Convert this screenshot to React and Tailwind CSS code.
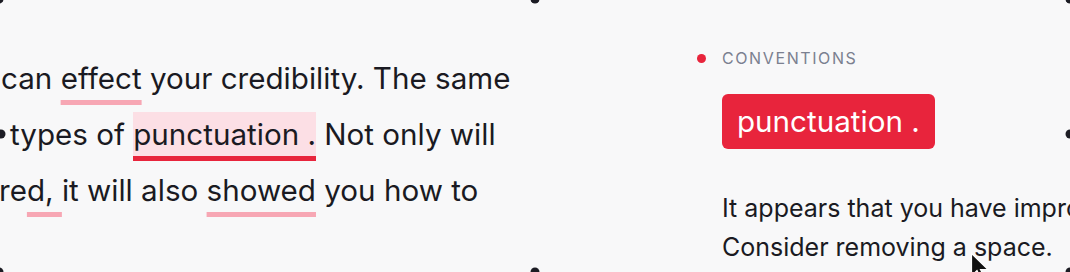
import React from "react";

function Handle({ className }) {
  return (
    <div
      className={`absolute w-[9px] h-[9px] rounded-full bg-[#1c1c24] -translate-x-1/2 -translate-y-1/2 ${className}`}
    />
  );
}

const wavy =
  "underline decoration-[#f7a7b4] decoration-[5px] underline-offset-[11px] [text-decoration-skip-ink:none]";

export default function App() {
  const font = { fontFamily: "Inter, 'Noto Sans', sans-serif" };
  return (
    <div
      className="relative w-[1070px] h-[272px] overflow-hidden bg-[#f8f8f9] flex"
      style={font}
    >
      {/* Left: document text */}
      <div className="w-[535px] h-full overflow-hidden pt-[50px] text-[29.6px] leading-[56px] text-[#1a1a22] whitespace-nowrap">
        <div className="pl-[1px]">
          can <span className={wavy}>effect</span> your credibility. The same
        </div>
        <div className="pl-[10px]">
          types of{" "}
          <span className="inline-block leading-[44px] bg-[#fcdfe5] border-b-[5px] border-[#e8243c]">
            punctuation .
          </span>{" "}
          Not only will
        </div>
        <div className="-ml-[1px]">
          re<span className={wavy}>d, </span>it will also{" "}
          <span className={wavy}>showed</span> you how to
        </div>
      </div>

      {/* Right: suggestion card */}
      <div className="w-[535px] h-full overflow-hidden pl-[162px] pt-[48px] whitespace-nowrap">
        <div className="flex items-center">
          <span className="w-[9px] h-[9px] rounded-full bg-[#e8243c]" />
          <span className="ml-[16px] text-[16px] leading-[20px] tracking-[1.6px] text-[#7b8090]">
            CONVENTIONS
          </span>
        </div>
        <div className="mt-[26px] ml-[25px] inline-flex items-center h-[55px] px-[15px] rounded-[6px] bg-[#e8243c] text-white text-[29.6px]">
          punctuation .
        </div>
        <div className="ml-[25px] mt-[40px] text-[25px] leading-[39px] text-[#1a1a22]">
          <div>It appears that you have improperly spaced</div>
          <div>Consider removing a space.</div>
        </div>
      </div>

      {/* Selection handles */}
      <Handle className="left-[-1px] top-[-1px]" />
      <Handle className="left-[535px] top-[-1px]" />
      <Handle className="left-[1070px] top-[-1px]" />
      <Handle className="left-[1px] top-[134px]" />
      <Handle className="left-[1070px] top-[134px]" />
      <Handle className="left-[-1px] top-[272px]" />
      <Handle className="left-[535px] top-[272px]" />
      <Handle className="left-[1070px] top-[272px]" />

      {/* Mouse cursor */}
      <svg
        className="absolute left-[970px] top-[252px]"
        width="22"
        height="30"
        viewBox="0 0 22 30"
      >
        <path
          d="M1.5 1.5 L1.5 24 L7 18.5 L11 27 L14.5 25.5 L10.5 17.5 L18 17.5 Z"
          fill="#111"
          stroke="#fff"
          strokeWidth="1.2"
        />
      </svg>
    </div>
  );
}
